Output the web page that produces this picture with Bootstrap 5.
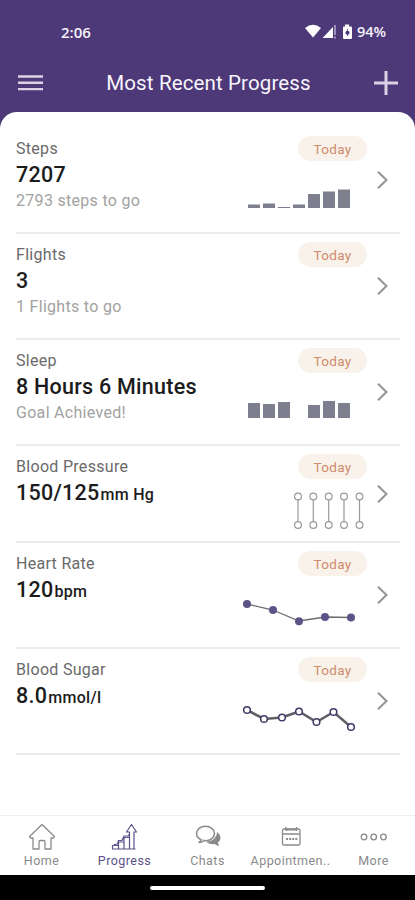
<!DOCTYPE html>
<html lang="en">
<head>
<meta charset="utf-8">
<meta name="viewport" content="width=device-width, initial-scale=1">
<title>Most Recent Progress</title>
<link href="https://cdn.jsdelivr.net/npm/bootstrap@5.3.0/dist/css/bootstrap.min.css" rel="stylesheet">
<style>
  body { font-family: Roboto, "Liberation Sans", sans-serif; background: #4d3878; }
  .app { height: 900px; width: 415px; overflow: hidden; }
  .status { height: 55px; padding: 9px 29px 0 61px; font: 500 15px "Open Sans", sans-serif; font-weight: 600; color: #f6f2fb; }
  .status .clock, .status .charge { line-height: 46px; }
  .status .charge { font-size: 14.5px; }
  .toolbar { height: 57px; padding: 0 17px 0 18px; color: #dcd2e6; }
  .toolbar h1 { font-size: 20.5px; font-weight: 400; color: #f8f5fc; line-height: 59px; letter-spacing: .13px; }
  .sheet { border-radius: 17px 17px 0 0; padding: 16px 15px 0 16px; }
  .metric { height: 106px; padding: 8px 12px 0 0; border-bottom: 2px solid #ebebeb; line-height: 26px; letter-spacing: .3px; }
  .metric.short { height: 97px; }
  .metric .name { font-size: 16px; color: #6a6a6a; }
  .metric .reading { font-size: 21.5px; font-weight: 500; color: #1c1c1c; letter-spacing: .25px; }
  .metric .unit { font-size: 16px; letter-spacing: .3px; margin-left: 1px; }
  .metric .goal { font-size: 16px; color: #a2a2a2; }
  .plot { width: 125px; }
  .today { width: 69px; height: 25px; line-height: 26px; background: #f8f2ea; color: #cf8b6b; font-size: 13.5px; letter-spacing: .3px; }
  .chev { width: 11px; margin-left: 10px; padding-bottom: 8px; }
  .tabs { height: 60px; border-top: 1px solid #eee; color: #8a8a8a; }
  .tab-item { width: 83px; padding-top: 7px; font-size: 12.5px; letter-spacing: .45px; line-height: 19px; }
  .tab-item.on { color: #5d5089; }
  .gesture { height: 25px; }
  .gesture span { width: 115px; height: 4px; }
  svg { display: block; flex-shrink: 0; }
</style>
<script src="https://cdn.jsdelivr.net/npm/bootstrap@5.3.0/dist/js/bootstrap.bundle.min.js"></script>
</head>
<body>
<div class="app d-flex flex-column">
  <div class="status d-flex align-items-center">
    <span class="clock me-auto">2:06</span>
    <svg width="48" height="18" viewBox="0 0 48 18" fill="#fff"><path d="M0 5Q8-1.500 16 5L8 14.500Z"/><path d="M17.500 15 28 4v11z"/><path d="M30 2v10M30 13.500v2" stroke="#d4cae4" stroke-width="1.200"/><path d="M40 1.500h4v2h2a1 1 0 0 1 1 1V15a1 1 0 0 1-1 1h-7a1 1 0 0 1-1-1V4.500a1 1 0 0 1 1-1h1z"/><path d="M42.500 6v7M41 8.500v2.500h3V8.500z" stroke="#4d3878" stroke-width=".8" fill="#4d3878"/></svg>
    <span class="charge ms-1">94%</span>
  </div>
  <header class="toolbar d-flex align-items-center justify-content-between">
    <svg width="25" height="17" viewBox="0 0 25 17" stroke="currentColor" stroke-width="2.400"><path d="M0 1.500h25M0 7.800h25M0 14.100h25"/></svg>
    <h1 class="m-0">Most Recent Progress</h1>
    <svg width="24" height="26" viewBox="0 0 24 26" stroke="currentColor" stroke-width="3"><path d="M0 12h24M12 0v24"/></svg>
  </header>
  <main class="sheet bg-white flex-grow-1">
    <section class="metric d-flex">
      <div class="flex-grow-1"><div class="name">Steps</div><div class="reading">7207</div><div class="goal">2793 steps to go</div></div>
      <div class="plot d-flex flex-column align-items-end"><span class="today rounded-pill text-center">Today</span>
        <svg width="125" height="68" fill="#7d7e8e"><path d="M6 43.500h12v3.500H6zM21 42.500h12V47H21zM36 46h12v1H36zM51 43.500h12v3.500H51zM66 33h12v14H66zM81 30.500h12V47H81zM96 28.500h12V47H96z"/></svg></div>
      <div class="chev d-flex align-items-center"><svg width="11" height="18" fill="none" stroke="#949494" stroke-width="2"><path d="M1 .700 9.500 9 1 17.300"/></svg></div>
    </section>
    <section class="metric d-flex">
      <div class="flex-grow-1"><div class="name">Flights</div><div class="reading">3</div><div class="goal">1 Flights to go</div></div>
      <div class="plot d-flex flex-column align-items-end"><span class="today rounded-pill text-center">Today</span></div>
      <div class="chev d-flex align-items-center"><svg width="11" height="18" fill="none" stroke="#949494" stroke-width="2"><path d="M1 .700 9.500 9 1 17.300"/></svg></div>
    </section>
    <section class="metric d-flex">
      <div class="flex-grow-1"><div class="name">Sleep</div><div class="reading">8 Hours 6 Minutes</div><div class="goal">Goal Achieved!</div></div>
      <div class="plot d-flex flex-column align-items-end"><span class="today rounded-pill text-center">Today</span>
        <svg width="125" height="68" fill="#7d7e8e"><path d="M6 30h12v15H6zM21 31h12v14H21zM36 29h12v16H36zM66 32h12v13H66zM81 28h12v17H81zM96 30h12v15H96z"/></svg></div>
      <div class="chev d-flex align-items-center"><svg width="11" height="18" fill="none" stroke="#949494" stroke-width="2"><path d="M1 .700 9.500 9 1 17.300"/></svg></div>
    </section>
    <section class="metric short d-flex">
      <div class="flex-grow-1"><div class="name">Blood Pressure</div><div class="reading">150/125<span class="unit">mm Hg</span></div></div>
      <div class="plot d-flex flex-column align-items-end"><span class="today rounded-pill text-center">Today</span>
        <svg width="125" height="60" fill="#fff" stroke="#999" stroke-width="1.200"><path d="M56 17.500v28M71.300 17.500v28M86.700 17.500v28M102 17.500v28M117.500 17.500v28"/><circle cx="56" cy="17.500" r="3.400"/><circle cx="71.300" cy="17.500" r="3.400"/><circle cx="86.700" cy="17.500" r="3.400"/><circle cx="102" cy="17.500" r="3.400"/><circle cx="117.500" cy="17.500" r="3.400"/><circle cx="56" cy="46" r="3.400"/><circle cx="71.300" cy="46" r="3.400"/><circle cx="86.700" cy="46" r="3.400"/><circle cx="102" cy="46" r="3.400"/><circle cx="117.500" cy="46" r="3.400"/></svg></div>
      <div class="chev d-flex align-items-center"><svg width="11" height="18" fill="none" stroke="#949494" stroke-width="2"><path d="M1 .700 9.500 9 1 17.300"/></svg></div>
    </section>
    <section class="metric d-flex">
      <div class="flex-grow-1"><div class="name">Heart Rate</div><div class="reading">120<span class="unit">bpm</span></div></div>
      <div class="plot d-flex flex-column align-items-end"><span class="today rounded-pill text-center">Today</span>
        <svg width="125" height="68"><path d="M5 28 31 34 57 45 83 41 109 41.500" fill="none" stroke="#6c6c72" stroke-width="1.300"/><g fill="#5c5487"><circle cx="5" cy="28" r="4"/><circle cx="31" cy="34" r="4"/><circle cx="57" cy="45.300" r="4"/><circle cx="83" cy="41" r="4"/><circle cx="109" cy="41.500" r="4"/></g></svg></div>
      <div class="chev d-flex align-items-center"><svg width="11" height="18" fill="none" stroke="#949494" stroke-width="2"><path d="M1 .700 9.500 9 1 17.300"/></svg></div>
    </section>
    <section class="metric d-flex">
      <div class="flex-grow-1"><div class="name">Blood Sugar</div><div class="reading">8.0<span class="unit">mmol/l</span></div></div>
      <div class="plot d-flex flex-column align-items-end"><span class="today rounded-pill text-center">Today</span>
        <svg width="125" height="68"><path d="M5 28 22 37 40 35.500 57 29.500 74.500 40 91.500 30 109 45" fill="none" stroke="#606068" stroke-width="2.600"/><g fill="#fff" stroke="#433968" stroke-width="1.500"><circle cx="5" cy="28" r="3.300"/><circle cx="22" cy="37" r="3.300"/><circle cx="40" cy="35.500" r="3.300"/><circle cx="57" cy="29.500" r="3.300"/><circle cx="74.500" cy="40" r="3.300"/><circle cx="91.500" cy="30" r="3.300"/><circle cx="109" cy="45" r="3.300"/></g></svg></div>
      <div class="chev d-flex align-items-center"><svg width="11" height="18" fill="none" stroke="#949494" stroke-width="2"><path d="M1 .700 9.500 9 1 17.300"/></svg></div>
    </section>
  </main>
  <nav class="tabs bg-white d-flex">
    <div class="tab-item d-flex flex-column align-items-center">
      <svg width="28" height="28" fill="none" stroke="currentColor" stroke-width="1.300" stroke-linejoin="round"><path d="M14 1.500 1.500 13.500l1 1.500H5v11h6v-7q0-1.500 1.500-1.500h3q1.500 0 1.500 1.500v7h6V15h2.500l1-1.500z"/></svg>Home</div>
    <div class="tab-item on d-flex flex-column align-items-center">
      <svg width="28" height="28" fill="none" stroke="currentColor" stroke-width="1.200" stroke-linejoin="round"><path d="M1.500 26v-3.500h6V26M7.500 26v-7h5.500v7M13 26V14.500h5.500V26M18.500 26V9H15.500l5-7.500 5 7.500h-2.500v17M1 26h23.500M3 21.500l3.500-.5 1-3.500h3.500l2-4.500h4l1.500-2"/></svg>Progress</div>
    <div class="tab-item d-flex flex-column align-items-center">
      <svg width="28" height="28"><path d="M23 9c4.500 3 4.500 8 1 10.500 0 1.500.5 2 1.500 3-2 .5-3.500-.5-5-1.500-3.500.5-6.500-.5-8.500-2.500 6 .5 11-4 11-9.500z" fill="currentColor"/><ellipse cx="11.500" cy="10.500" rx="9" ry="7.300" fill="#fff" stroke="currentColor" stroke-width="1.500"/><path d="M7 16q0 2.500-2.500 3.500 3.500 0 5.500-2" fill="#fff" stroke="currentColor" stroke-width="1.300"/></svg>Chats</div>
    <div class="tab-item d-flex flex-column align-items-center">
      <svg width="28" height="28" fill="none" stroke="currentColor" stroke-width="1.300"><rect x="5.500" y="6" width="17.500" height="16" rx="1.500"/><path d="M5.500 11H23M9 4v4M19.500 4v4"/><path d="M8 6.500h12" stroke-width="2"/><path d="M9 16h11.500" stroke-width="1.800" stroke-dasharray="2 1.100"/></svg><span class="text-nowrap">Appointmen..</span></div>
    <div class="tab-item d-flex flex-column align-items-center">
      <svg width="28" height="28" fill="none" stroke="currentColor" stroke-width="1.300"><circle cx="4" cy="14" r="2.800"/><circle cx="13.700" cy="14" r="2.800"/><circle cx="23.500" cy="14" r="2.800"/></svg>More</div>
  </nav>
  <div class="gesture bg-black d-flex align-items-center justify-content-center"><span class="bg-white rounded-pill"></span></div>
</div>
</body>
</html>
